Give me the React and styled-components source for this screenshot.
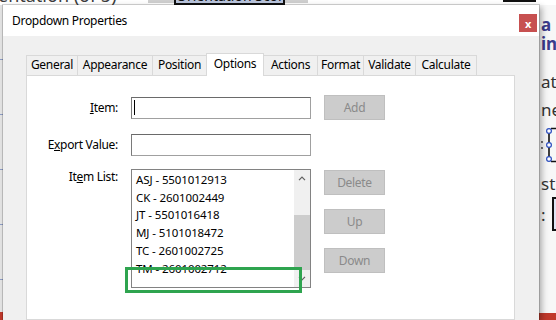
import React from "react";
import styled, { createGlobalStyle } from "styled-components";

const GlobalStyle = createGlobalStyle`
  html, body {
    margin: 0;
    padding: 0;
    overflow: hidden;
    background: #fafafa;
  }
  body {
    font-family: "Noto Sans", "Open Sans", sans-serif;
  }
`;

const Screen = styled.div`
  width: 556px;
  height: 320px;
  overflow: hidden;
  display: grid;
  grid-template-columns: 3px 536px 1fr;
  grid-template-rows: 5px 1fr;
  background: #fafafa;
`;

/* ---- the app behind the dialog ---- */

const TopStrip = styled.div`
  grid-column: 1 / -1;
  display: flex;
  align-items: flex-start;
  overflow: hidden;
  background: #fff;
`;

const BgHeading = styled.div`
  width: 150px;
  margin: -14px 0 0 -2px;
  font-size: 18px;
  line-height: 18px;
  color: #3c3c3c;
  white-space: nowrap;
`;

const GrayBand = styled.div`
  width: ${(p) => p.$w}px;
  height: 3px;
  background: #cfcfcf;
`;

const ScoreChip = styled.div`
  width: 111px;
  height: 18px;
  margin-top: -13px;
  box-sizing: border-box;
  border: 2px solid #111;
  background: #b9c4dc;
  color: #111;
  font-size: 14px;
  line-height: 14px;
  text-align: center;
  white-space: nowrap;
`;

const Spacer = styled.div`
  flex: 1;
`;

const BlackTab = styled.div`
  width: 33px;
  height: 2px;
  margin-right: 20px;
  background: #111;
`;

const LeftStrip = styled.div`
  background:
    linear-gradient(to top, #c0392b 0, #c0392b 8px, transparent 8px),
    repeating-linear-gradient(to bottom, #e4e4e4 0, #e4e4e4 54px, #8d9cc4 54px, #8d9cc4 55px);
`;

const RightStrip = styled.div`
  display: flex;
  flex-direction: column;
  overflow: hidden;
  padding-top: 10px;
  background: #f7f7f7;
`;

const BgLine = styled.div`
  margin-top: ${(p) => p.$mt || 0}px;
  font-size: 17px;
  line-height: 19px;
  font-weight: ${(p) => (p.$bold ? 700 : 400)};
  color: ${(p) => (p.$bold ? "#3b3b8c" : "#333")};
  white-space: nowrap;
  padding-left: 2px;
`;

const BgField = styled.div`
  display: flex;
  align-items: center;
  gap: 6px;
  margin-top: 4px;
  padding-left: 2px;
  font-size: 17px;
  color: #333;
`;

const BgBox = styled.div`
  width: 20px;
  height: 30px;
  border: 2px solid #111;
  border-right: none;
  background: #dfe5f5;
`;

const RedBar = styled.div`
  margin-top: auto;
  height: 7px;
  background: #c0392b;
`;

/* ---- dialog ---- */

const Dialog = styled.div`
  position: relative;
  z-index: 1;
  display: flex;
  flex-direction: column;
  background: #f0f0f0;
  letter-spacing: -0.3px;
  box-shadow: 0 0 0 1px rgba(0, 0, 0, 0.16), 3px 2px 6px rgba(0, 0, 0, 0.3);
`;

const TitleBar = styled.div`
  height: 31px;
  display: flex;
  align-items: center;
  justify-content: space-between;
  padding-left: 9px;
  background: #fff;
  font-size: 12px;
  color: #000;
`;

const CloseButton = styled.div`
  align-self: flex-start;
  width: 18px;
  height: 18px;
  margin: 9px 2px 0 0;
  display: flex;
  align-items: center;
  justify-content: center;
  background: #c75050;
  color: #fff;
  font-size: 11px;
  font-weight: 700;
  line-height: 1;
`;

const Body = styled.div`
  flex: 1;
  display: flex;
  flex-direction: column;
  padding: 17px 24px 0 23px;
`;

const TabRow = styled.div`
  height: 22px;
  display: flex;
  align-items: flex-end;
`;

const Tab = styled.div`
  position: relative;
  width: ${(p) => p.$w}px;
  height: ${(p) => (p.$active ? 23 : 20)}px;
  margin-right: -1px;
  margin-bottom: ${(p) => (p.$active ? -1 : 0)}px;
  z-index: ${(p) => (p.$active ? 2 : 1)};
  box-sizing: border-box;
  border: 1px solid #d9d9d9;
  border-bottom: none;
  background: ${(p) => (p.$active ? "#fff" : "#f0f0f0")};
  display: flex;
  justify-content: center;
  padding-top: ${(p) => (p.$active ? 2 : 1)}px;
  font-size: 12px;
  line-height: 16px;
  color: #000;
`;

const Panel = styled.div`
  flex: 1;
  background: #fff;
  border: 1px solid #d9d9d9;
  padding-top: 19px;
`;

const Form = styled.div`
  display: grid;
  grid-template-columns: 91px 180px 61px;
  grid-template-rows: 25px 25px auto;
  column-gap: 13px;
  row-gap: 12px;
`;

const Label = styled.div`
  align-self: ${(p) => (p.$top ? "start" : "center")};
  text-align: right;
  font-size: 12px;
  line-height: 16px;
  color: #000;
  white-space: nowrap;
`;

const TextBox = styled.div`
  align-self: center;
  height: 22px;
  box-sizing: border-box;
  display: flex;
  align-items: center;
  border: 1px solid #a0a0a0;
  border-top-color: #6a6a6a;
  border-left-color: #7a7a7a;
  background: #fff;
`;

const Caret = styled.span`
  width: 1px;
  height: 15px;
  margin-left: 2px;
  background: #000;
`;

const Button = styled.button`
  width: 61px;
  height: 25px;
  padding: 0;
  box-sizing: border-box;
  border: 1px solid #bfbfbf;
  background: #cccccc;
  color: #8a8a8a;
  font-family: inherit;
  font-size: 12px;
  letter-spacing: inherit;
  align-self: center;
`;

const ButtonStack = styled.div`
  display: flex;
  flex-direction: column;
  gap: 14px;
  padding-top: 1px;
`;

const ListField = styled.div`
  position: relative;
`;

const ListBox = styled.div`
  height: 119px;
  box-sizing: border-box;
  display: flex;
  border: 1px solid #828282;
  background: #fff;
  overflow: hidden;
`;

const Items = styled.div`
  flex: 1;
  padding: 1px 0 0 4px;
  overflow: hidden;
`;

const Item = styled.div`
  font-size: 11.5px;
  line-height: 17.7px;
  letter-spacing: -0.1px;
  color: #000;
  white-space: nowrap;
`;

const ScrollBar = styled.div`
  width: 16px;
  display: flex;
  flex-direction: column;
  background: #f0f0f0;
`;

const ArrowCell = styled.div`
  height: 17px;
  display: flex;
  align-items: center;
  justify-content: center;
`;

const Track = styled.div`
  flex: 1;
  display: flex;
  flex-direction: column;
  padding-top: 28px;
`;

const Thumb = styled.div`
  flex: 1;
  background: #cdcdcd;
`;

const Annotation = styled.div`
  position: absolute;
  left: -6px;
  top: 98px;
  width: 177px;
  height: 26px;
  box-sizing: border-box;
  border: 3px solid #2ea44f;
  pointer-events: none;
`;

const Chevron = ({ up }) => (
  <svg width="8" height="5" viewBox="0 0 8 5">
    <path
      d={up ? "M1 4.2 L4 1.2 L7 4.2" : "M1 0.8 L4 3.8 L7 0.8"}
      fill="none"
      stroke="#606060"
      strokeWidth="1.2"
    />
  </svg>
);

const Handle = () => (
  <svg width="17" height="36" viewBox="0 0 17 36" style={{ marginTop: 8 }}>
    <path d="M10 4 V32 M12 1.5 H17 M12 34.5 H17" stroke="#111" strokeWidth="1.6" fill="none" />
    <circle cx="10" cy="4" r="2.4" fill="#fff" stroke="#2d4fc0" strokeWidth="1.2" />
    <circle cx="10" cy="18" r="2.4" fill="#fff" stroke="#2d4fc0" strokeWidth="1.2" />
    <circle cx="10" cy="32" r="2.4" fill="#fff" stroke="#2d4fc0" strokeWidth="1.2" />
    <circle cx="3" cy="15" r="0.9" fill="#333" />
    <circle cx="3" cy="21" r="0.9" fill="#333" />
  </svg>
);

const tabs = [
  { label: "General", w: 52 },
  { label: "Appearance", w: 76 },
  { label: "Position", w: 55 },
  { label: "Options", w: 58, active: true },
  { label: "Actions", w: 55 },
  { label: "Format", w: 47 },
  { label: "Validate", w: 53 },
  { label: "Calculate", w: 62 },
];

const items = [
  "ASJ - 5501012913",
  "CK - 2601002449",
  "JT - 5501016418",
  "MJ - 5101018472",
  "TC - 2601002725",
  "TM - 2601002712",
];

const App = () => (
  <>
    <GlobalStyle />
    <Screen>
      <TopStrip>
        <BgHeading>entation (of 5)</BgHeading>
        <GrayBand $w={26} />
        <ScoreChip>Orientation Score</ScoreChip>
        <GrayBand $w={23} />
        <Spacer />
        <BlackTab />
      </TopStrip>

      <LeftStrip />

      <Dialog>
        <TitleBar>
          <span>Dropdown Properties</span>
          <CloseButton>x</CloseButton>
        </TitleBar>
        <Body>
          <TabRow>
            {tabs.map((t) => (
              <Tab key={t.label} $w={t.w} $active={t.active}>
                {t.label}
              </Tab>
            ))}
          </TabRow>
          <Panel>
            <Form>
              <Label>
                <u>I</u>tem:
              </Label>
              <TextBox>
                <Caret />
              </TextBox>
              <Button>Add</Button>

              <Label>
                E<u>x</u>port Value:
              </Label>
              <TextBox />
              <div />

              <Label $top>
                It<u>e</u>m List:
              </Label>
              <ListField>
                <ListBox>
                  <Items>
                    {items.map((it) => (
                      <Item key={it}>{it}</Item>
                    ))}
                  </Items>
                  <ScrollBar>
                    <ArrowCell>
                      <Chevron up />
                    </ArrowCell>
                    <Track>
                      <Thumb />
                    </Track>
                    <ArrowCell>
                      <Chevron />
                    </ArrowCell>
                  </ScrollBar>
                </ListBox>
                <Annotation />
              </ListField>
              <ButtonStack>
                <Button>Delete</Button>
                <Button>Up</Button>
                <Button>Down</Button>
              </ButtonStack>
            </Form>
          </Panel>
        </Body>
      </Dialog>

      <RightStrip>
        <BgLine $bold>a p</BgLine>
        <BgLine $bold>in</BgLine>
        <BgLine $mt={19}>at</BgLine>
        <BgLine $mt={9}>ne:</BgLine>
        <Handle />
        <BgLine $mt={11}>st</BgLine>
        <BgField>
          :<BgBox />
        </BgField>
        <RedBar />
      </RightStrip>
    </Screen>
  </>
);

export default App;
